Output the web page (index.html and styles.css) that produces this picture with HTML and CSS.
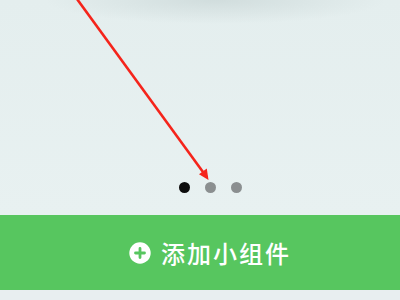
FILE: index.html
```html
<!DOCTYPE html>
<html lang="zh">
<head>
<meta charset="utf-8">
<link rel="stylesheet" href="styles.css">
</head>
<body>
<div class="screen">
  <div class="stage">
    <div class="dots">
      <span class="dot active"></span>
      <span class="dot"></span>
      <span class="dot"></span>
    </div>
  </div>
  <div class="add-bar">
    <svg class="plus" viewBox="0 0 22 22" width="22" height="22">
      <circle cx="11" cy="11" r="10.7" fill="#fff"/>
      <path d="M11 6.5v9M6.5 11h9" stroke="#57c65f" stroke-width="2.8" stroke-linecap="round"/>
    </svg>
    <span class="label">添加小组件</span>
  </div>
  <div class="bottom"></div>
  <svg class="arrow" viewBox="0 0 400 300" width="400" height="300">
    <line x1="77" y1="-1" x2="203" y2="172" stroke="#f5241b" stroke-width="2.6"/>
    <polygon points="208.5,180 206.8,168.6 199,174.3" fill="#f5241b"/>
  </svg>
</div>
</body>
</html>
```
FILE: styles.css
```css
html, body {
  margin: 0;
  padding: 0;
}
body {
  width: 400px;
  height: 300px;
  overflow: hidden;
  font-family: "Noto Sans CJK SC", "Noto Sans", sans-serif;
}
.screen {
  position: relative;
  width: 400px;
  height: 300px;
  display: flex;
  flex-direction: column;
  background: #e7f0f0;
}
.stage {
  height: 215px;
  display: flex;
  flex-direction: column;
  justify-content: flex-end;
  align-items: center;
  padding-bottom: 22px;
  padding-left: 21px;
  box-sizing: border-box;
  background:
    radial-gradient(ellipse 170px 24px at 215px 0px, rgba(185,200,200,0.45), rgba(185,200,200,0) 100%),
    linear-gradient(#e4eeee, #e8f1f1);
}
.dots {
  display: flex;
  gap: 15px;
}
.dot {
  width: 11px;
  height: 11px;
  border-radius: 50%;
  background: #8b8f90;
}
.dot.active {
  background: #0d0d0d;
}
.add-bar {
  height: 75px;
  background: #57c65f;
  display: flex;
  align-items: center;
  justify-content: center;
  padding-left: 20px;
  box-sizing: border-box;
}
.plus {
  display: block;
  margin-right: 10px;
}
.label {
  color: #fff;
  font-size: 24px;
  font-weight: 500;
  letter-spacing: 2px;
  line-height: 1;
}
.bottom {
  flex: 1;
  background: #e8eef0;
}
.arrow {
  position: absolute;
  left: 0;
  top: 0;
  pointer-events: none;
}
```
